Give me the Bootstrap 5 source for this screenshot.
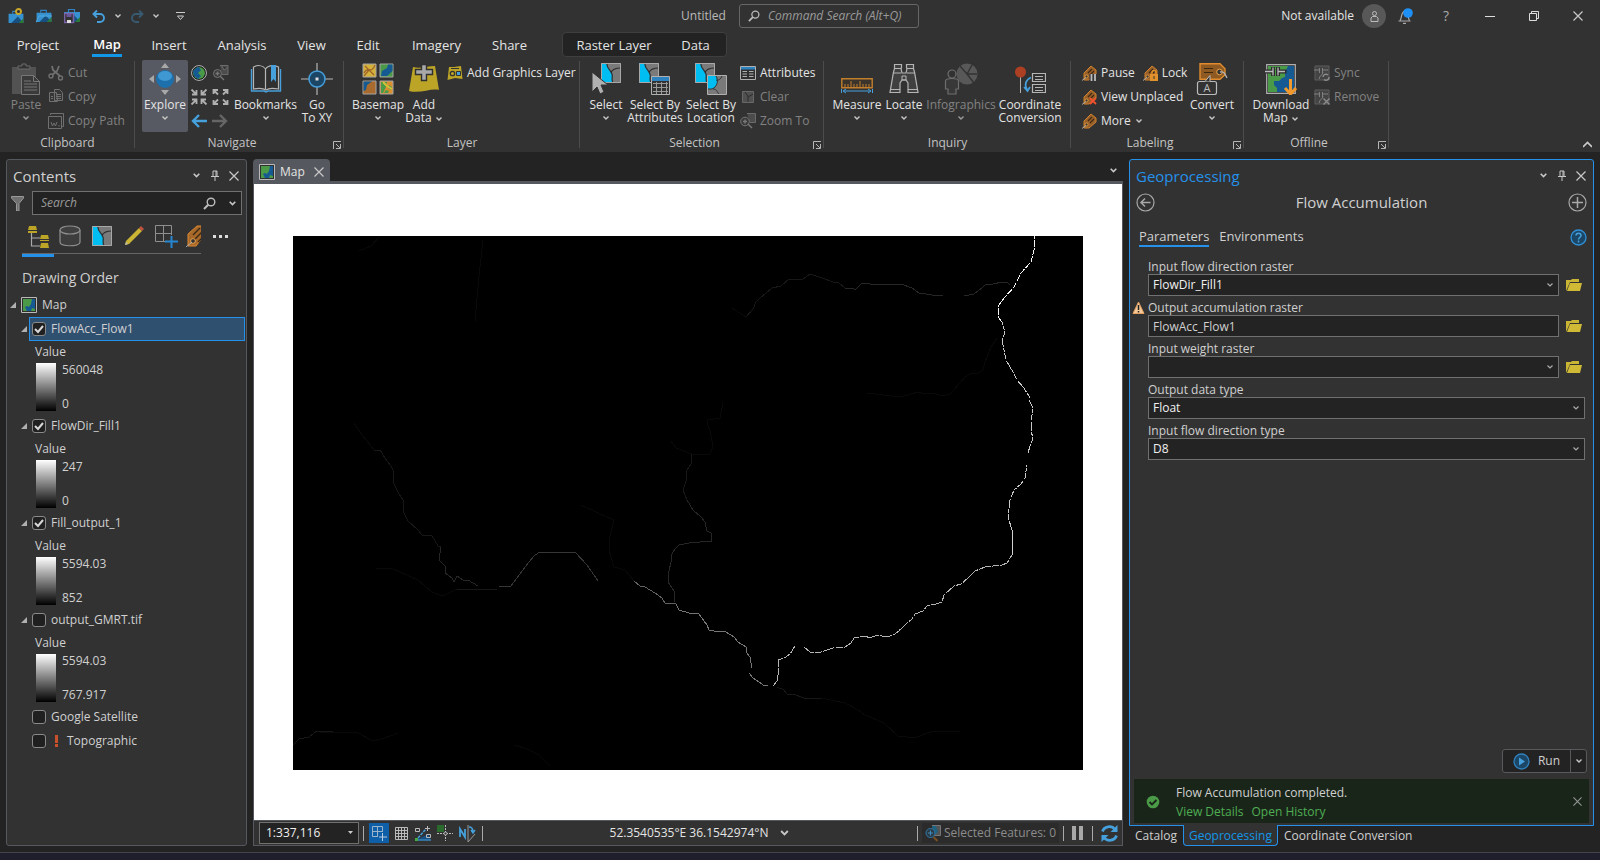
<!DOCTYPE html>
<html lang="en" data-bs-theme="dark">
<head>
<meta charset="utf-8">
<meta name="viewport" content="width=device-width, initial-scale=1">
<title>Untitled - Map</title>
<link href="https://cdn.jsdelivr.net/npm/bootstrap@5.3.0/dist/css/bootstrap.min.css" rel="stylesheet">
<style>
:root{--bg:#323232;--dark:#232323;--line:#55585f;--txt:#e4e4e4;--soft:#d0d0d0;--off:#828282;--blue:#2591ea;--field:#707070}
html,body{height:100%}
body{font:12px/16px "Open Sans","Noto Sans",sans-serif;background:var(--dark);color:var(--txt);overflow:hidden}
button{background:none;border:0;padding:0;color:inherit;font:inherit;text-align:center}
button:disabled{color:var(--off)}
svg{display:block;flex:none}
h1,h2,h3{font:inherit;color:inherit;margin:0}
.bar-title{background:var(--bg);height:32px}
.title-side{flex:1 1 0}
.title-side h1,.doc{color:#b9b9b9}
.cmd{width:180px;height:24px;border:1px solid #666;border-radius:3px;margin-left:13px}
.cmd input,.find input{background:none;border:0;outline:0;color:var(--txt);font:inherit;font-style:italic;min-width:0;width:0;padding:0}
.cmd input::placeholder,.find input::placeholder{color:#9a9a9a;opacity:1}
.avatar{width:24px;height:24px;border-radius:50%;background:#585858}
.win{width:44px;height:32px}
.win.ask{color:#aaa;font-size:14px}
.bell{width:38px}
.tabs{background:var(--bg);height:26px;font-size:13px;padding-left:2px}
.tab-main{display:grid;grid-template-columns:72px 66px 58px 88px 51px 62px 75px 71px}
.tab-ctx{display:grid;grid-template-columns:102px 61px;background:var(--dark);border:1px solid #3f3f3f;border-radius:4px;margin-left:17px;height:25px}
.tabs a,.gp-tabs a,.dock a,.msg a{color:inherit;text-decoration:none}
.tabs a{display:flex;align-items:center;justify-content:center;height:25px}
.tabs .tab-ctx a{height:23px}
.tabs a.on{font-weight:600;color:#fff}
.tabs a.on span{border-bottom:3px solid #1296e8;line-height:19px;margin-top:3px;padding:0 1px}
.ribbon{background:var(--bg);height:94px;padding-top:2px}
.grp{position:relative;height:90px;display:flex;flex-direction:column}
.grp::after{content:"";position:absolute;right:0;top:1px;bottom:2px;width:1px;background:#4c4c4c}
.grp-body{display:grid;height:76px}
.grp-name{color:#c3c3c3;height:16px;line-height:17px;text-align:center}
.has-launch .grp-name{padding-right:15px}
.launch{position:absolute;right:3px;bottom:1px}
.g1{width:135px}.g1 .grp-body{padding-left:10px;grid-template-columns:32px 90px;column-gap:6px}
.g2{width:209px}.g2 .grp-body{padding-left:7px;grid-template-columns:46px 44px 67px 36px}
.g3{width:236px}.g3 .grp-body{padding-left:7px;grid-template-columns:54px 38px 130px}
.g4{width:244px}.g4 .grp-body{padding-left:4px;grid-template-columns:44px 54px 58px 76px}
.g5{width:247px}.g5 .grp-body{padding-left:8px;grid-template-columns:50px 44px 70px 68px}
.g6{width:173px}.g6 .grp-body{padding-left:11px;grid-template-columns:107px 46px}
.g7{width:145px}.g7 .grp-body{padding-left:9px;grid-template-columns:56px 68px;column-gap:5px}
.big{display:flex;flex-direction:column;align-items:center;padding-top:3px;line-height:13px;height:72px;white-space:nowrap;min-width:0}
.big svg.pic{margin-bottom:3px}
.big svg.car{margin-top:4px}
.big.on{background:#575a62;border-radius:2px}
.smalls{display:flex;flex-direction:column;padding-top:1px}
.sm{display:flex;align-items:center;gap:4px;height:24px;white-space:nowrap}
.quick{display:grid;grid-template-columns:22px 22px;grid-auto-rows:24px;padding:1px 0 0 2px;height:73px;align-items:center}
.work{flex:1;min-height:0;padding:7px 6px 0;gap:6px}
.pane{background:var(--bg);border:1px solid var(--line);border-radius:3px}
.toc{width:241px;color:var(--soft)}
.pane-head{height:31px;font-size:15px;padding:0 7px 0 6px;gap:10px}
.pane-head h2{flex:1}
.find{height:24px;background:var(--dark);border:1px solid var(--field)}
.toc-tools{height:39px;margin:0 45px 0 15px;border-bottom:1px solid #666;display:grid;grid-template-columns:32px 32px 32px 32px 32px 19px;justify-items:center;align-items:center}
.toc-tools button{height:39px;display:flex;align-items:center;justify-content:center;width:100%;overflow:hidden}
.toc-tools .on{border-bottom:3px solid var(--blue);padding-top:3px;height:41px;margin-top:1px}
.order{font-size:14px;margin:16px 0 7px;padding-left:15px}
.lyr{height:24px;display:flex;align-items:center;gap:2px;padding-left:14px}
.lyr .lbl{flex:1;height:24px;border:1px solid transparent;display:flex;align-items:center;padding-left:2px;gap:5px;margin-right:1px}
.lyr.sel .lbl{background:#305070;border-color:var(--blue)}
.lyr.top{padding-left:3px;gap:5px}
.chk{appearance:none;width:14px;height:14px;margin:0;border:1px solid #8a8a8a;border-radius:3px;background:#202020}
.chk:checked{background:#202020 url("data:image/svg+xml,%3Csvg xmlns='http://www.w3.org/2000/svg' viewBox='0 0 12 12'%3E%3Cpath d='M2 6l3 3 5-6' fill='none' stroke='%23d8d8d8' stroke-width='2'/%3E%3C/svg%3E") center/12px no-repeat}
.val{font-weight:500;height:22px;line-height:22px;padding-left:28px}
.ramp-row{display:flex;gap:6px;padding-left:29px;height:48px;margin-bottom:3px}
.ramp{width:20px;background:linear-gradient(#fff,#000)}
.ramp-row ul{display:flex;flex-direction:column;justify-content:space-between;margin:0;padding:0;list-style:none;line-height:14px}
.view-tabs{padding-right:5px}
.view-tab{background:#55585e;height:22px;width:77px;border-radius:4px 4px 0 0;padding:3px 0 0 6px;gap:5px}
.view{border:1px solid var(--line);border-top:3px solid #55585e;background:#fff;padding:52px 39px 50px 39px}
.view svg{background:#000}
.status{height:25px;background:var(--bg);border:1px solid var(--line);border-top:0;padding:0 4px 0 5px}
.sep{width:1px;height:15px;background:#aaa}
.scale,.fld select,.fld input{appearance:none;background-color:var(--dark);border:1px solid var(--field);border-radius:0;color:#f0f0f0;font:inherit;padding:0 4px;height:22px}
.scale{width:100px;padding-left:6px;background-image:url("data:image/svg+xml,%3Csvg xmlns='http://www.w3.org/2000/svg' viewBox='0 0 6 4'%3E%3Cpath d='M0 0h6L3 4z' fill='%23ccc'/%3E%3C/svg%3E");background-repeat:no-repeat;background-position:right 5px center;background-size:5px}
.fld input{color:var(--soft)}
.fld select{background-image:url("data:image/svg+xml,%3Csvg xmlns='http://www.w3.org/2000/svg' viewBox='0 0 8 6'%3E%3Cpath d='M1.5 1.5L4 4l2.5-2.5' fill='none' stroke='%23aaa' stroke-width='1.2'/%3E%3C/svg%3E");background-repeat:no-repeat;background-position:right 4px center;background-size:8px}
.snaps{gap:2px;padding:0 5px}
.snap{width:20px;height:20px;display:flex;align-items:center;justify-content:center}
.snap.on{background:#0f5fa8}
.coords{gap:11px}
.feat{background:#2b2b2b;color:#8c8c8c;height:20px;padding:0 3px;gap:3px}
.gp{border-color:var(--blue);flex:1;border-radius:3px 3px 0 0;color:var(--soft)}
.gp h2{color:var(--blue)}
.gp-col{width:465px}
.gp-title{font-size:15px;height:22px;padding:0 6px}
.gp-tabs{font-size:13px;height:32px;padding:0 6px 0 9px;gap:10px;margin-top:8px}
.gp-tabs a{line-height:18px;border-bottom:2px solid transparent}
.gp-tabs a.on{border-color:var(--blue);font-weight:500}
.form{padding:6px 8px 0 18px}
.fld{position:relative;height:41px;display:grid;grid-template-columns:1fr;align-content:start}
.fld.br{grid-template-columns:1fr 26px}
.fld label{grid-column:1/-1;line-height:15px;height:15px}
.warn{position:absolute;left:-16px;top:1px}
.run{background:var(--dark);border:1px solid #58595c;border-radius:3px;height:24px;width:85px;margin-right:6px}
.run .go{flex:1;gap:14px;border-right:1px solid #58595c;height:22px}
.run .more{width:15px;height:22px;display:flex;align-items:center;justify-content:center}
.msg{background:#1a251a;height:44px;margin:6px 4px 2px 4px;padding:1px 7px 0 12px;line-height:15px}
.msg a{color:#4fae53}
.dock{height:20px}
.dock a{padding:0 6px;line-height:19px;height:20px;color:#cfcfcf}
.dock a.on{background:var(--bg);border:1px solid var(--blue);border-top:0;border-radius:0 0 4px 4px;margin-top:-1px;height:21px;line-height:21px;color:#1296e8;padding:0 5px}
.foot{height:14px;padding-top:6px}
.foot div{border-top:1px solid #44444a;height:8px;background:#1f1e2c}
</style>
</head>
<body class="d-flex flex-column">
<svg width="0" height="0" class="position-absolute" aria-hidden="true">
<symbol id="car" viewBox="0 0 8 6"><path d="M1.500 1.500L4 4l2.500-2.500" fill="none" stroke="#c8c8c8" stroke-width="1.400"/></symbol>
<symbol id="x" viewBox="0 0 10 10"><path d="M.5.5l9 9m0-9l-9 9" stroke="#c8c8c8" stroke-width="1.200"/></symbol>
<symbol id="pin" viewBox="0 0 8 11"><path d="M2 1h4v5.500H2zM5 1v5M0 6.500h8M4 7v4" fill="none" stroke="#c8c8c8"/></symbol>
<symbol id="mag" viewBox="0 0 13 13"><circle cx="8" cy="5" r="3.800" fill="none" stroke="#bbb" stroke-width="1.400"/><path d="M5.200 7.800L1 12" stroke="#bbb" stroke-width="2"/></symbol>
<symbol id="lau" viewBox="0 0 8 8"><path d="M.5 8V.5H8M3 3l4 4M7.500 3v4.500H3" fill="none" stroke="#b5b5b5"/></symbol>
<symbol id="tri" viewBox="0 0 6 6"><path d="M6 0v6H0z" fill="#b0b0b0"/></symbol>
<symbol id="mapico" viewBox="0 0 16 16"><path d="M.5.5h15v15H.5z" fill="#303030" stroke="#b9b9b9"/><path d="M2 2h12v12H2z" fill="#4b9a48"/><path d="M14 2v10l-3-1-1 3H6l-2-4 2-1 2 1 2-3 1-5z" fill="#155a93"/></symbol>
<symbol id="fold" viewBox="0 0 16 12"><path d="M0 12V1h5l1-1h7v3H4L1 10z" fill="#c9b434"/><path d="M4 4h12l-2 8H1z" fill="#d0ba35"/></symbol>
<symbol id="tag" viewBox="0 0 16 16"><path d="M2 8L9 1l5 4v4L7 15H2z" fill="#99602a" stroke="#cf812c"/><path d="M6 8l4-4M8 10l4-4" stroke="#3d2913" stroke-width="1.200"/><circle cx="4.500" cy="11.500" r="1.500" fill="#333" stroke="#e09a40"/><path d="M0 15.500l4-3" stroke="#aaa"/></symbol>
<symbol id="feat" viewBox="0 0 20 20"><path d="M0 0h20v20H0z" fill="#7a7a7a"/><path d="M0 0h6c-1 5 4 7 5 11 1 3-1 5 1 9H0z" fill="#00bdf2"/><path d="M6 0c-1 5 4 7 5 11 1 3-1 5 1 9M10 10c1-4 5-5 10-5" fill="none" stroke="#2e2e2e" stroke-width="1.200"/><path d="M.5.500h19v19H.5z" fill="none" stroke="#a8a8a8"/></symbol>
<symbol id="proj" viewBox="0 0 16 14"><path d="M4.500 4V1.500h6V4" fill="none" stroke="#2f82c4" stroke-width="1.200"/><path d="M0 4h16v10H0z" fill="#3591cf"/><path d="M3 14l7-7 6 7z" fill="#174f80"/><path d="M11 14l5-5v5z" fill="#2c7a3a"/></symbol>
<symbol id="offm" viewBox="0 0 16 16"><path d="M1 1h14v14H1z" fill="#444" stroke="#5c5c5c"/><path d="M0 5h5M5.500 3v5M8.500 3v5M9 5h5M5 14c0-3 4-4 4-7" fill="none" stroke="#808080"/></symbol>
</svg>

<header class="bar-title d-flex align-items-center">
 <div class="title-side d-flex align-items-center">
  <button class="ms-2" aria-label="New project"><svg width="16" height="16"><use href="#proj" y="2" width="16" height="13"/><circle cx="10.500" cy="3.500" r="2.500" fill="#333" stroke="#c9a82c" stroke-width="1.800"/><path d="M10.500 0v1m0 5v1M7 3.500h1m5 0h1" stroke="#c9a82c"/></svg></button>
  <button class="ms-2 ps-1" aria-label="Open project"><svg width="16" height="16"><use href="#proj" y="1" width="16" height="13"/><path d="M0 14.500L3 8h13" fill="none" stroke="#54a8dc"/></svg></button>
  <button class="ms-2 ps-1" aria-label="Save project"><svg width="16" height="16"><use href="#proj" width="16" height="14"/><path d="M.5 5.500h9v9h-9z" fill="#323232" stroke="#7a62a8" stroke-width="1.600"/><path d="M2.500 6h5v3h-5z" fill="#6c559a"/><path d="M3 12h4v3H3z" fill="#ddd"/></svg></button>
  <button class="ms-2 ps-1" aria-label="Undo"><svg width="14" height="13"><path d="M5 .5L1.500 4 5 7.500M2 4h6a4 4 0 010 8H5" fill="none" stroke="#45a0dc" stroke-width="1.900"/></svg></button>
  <svg class="ms-2" width="8" height="6"><use href="#car"/></svg>
  <button class="ms-2" aria-label="Redo"><svg width="14" height="13"><path d="M9 .5L12.500 4 9 7.500M12 4H6a4 4 0 000 8h3" fill="none" stroke="#375a70" stroke-width="1.900"/></svg></button>
  <svg class="ms-2" width="8" height="6"><use href="#car"/></svg>
  <button class="ms-3" aria-label="Customize"><svg width="9" height="9"><path d="M0 .5h9M1.500 4L4.500 7.500 7.500 4z" fill="none" stroke="#ccc"/></svg></button>
 </div>
 <h1 class="doc">Untitled</h1>
 <label class="cmd d-flex align-items-center px-2 gap-1"><svg width="12" height="12"><use href="#mag"/></svg><input class="flex-grow-1 ms-1" aria-label="Command Search" placeholder="Command Search (Alt+Q)"></label>
 <div class="title-side d-flex align-items-center justify-content-end">
  <span class="me-2">Not available</span>
  <button class="avatar d-flex align-items-center justify-content-center" aria-label="Account"><svg width="9" height="11"><circle cx="4.500" cy="2.500" r="2" fill="none" stroke="#bbb"/><path d="M1 10.500V7l1.500-1.500h4L8 7v3.500z" fill="none" stroke="#bbb"/></svg></button>
  <button class="bell d-flex justify-content-center" aria-label="Notifications"><svg width="15" height="16"><path d="M.5 13h12M2 12.500c2-2 .5-8 5-10 4 2 2.500 8 4.500 10M5 15.300h3" fill="none" stroke="#aaa" stroke-width="1.200"/><circle cx="10" cy="5" r="4.800" fill="#1e90f5"/></svg></button>
  <button class="win ask" aria-label="Help">?</button>
  <button class="win d-flex align-items-center justify-content-center" aria-label="Minimize"><svg width="10" height="10"><path d="M0 5.500h10" stroke="#ddd"/></svg></button>
  <button class="win d-flex align-items-center justify-content-center" aria-label="Restore"><svg width="10" height="10"><path d="M.5 2.500h7v7h-7zM2.500 2V.500h7v7H8" fill="none" stroke="#ddd"/></svg></button>
  <button class="win d-flex align-items-center justify-content-center" aria-label="Close"><svg width="10" height="10"><use href="#x"/></svg></button>
 </div>
</header>

<nav class="tabs d-flex">
 <div class="tab-main"><a href="#">Project</a><a href="#" class="on"><span>Map</span></a><a href="#">Insert</a><a href="#">Analysis</a><a href="#">View</a><a href="#">Edit</a><a href="#">Imagery</a><a href="#">Share</a></div>
 <div class="tab-ctx"><a href="#">Raster Layer</a><a href="#">Data</a></div>
</nav>

<section class="ribbon d-flex">
 <div class="grp g1"><div class="grp-body">
  <button class="big" disabled><svg class="pic" width="32" height="32"><path d="M2 4h24v27H2z" fill="#525252"/><path d="M8 6V3h4V1h4v2h4v3z" fill="#323232" stroke="#6a6a6a"/><path d="M11.500 12.500h12l6 6v13h-18z" fill="#3a3a3a" stroke="#777"/><path d="M23.500 12.500v6h6M14 18h7m-7 3h13m-13 3h13m-13 3h13" fill="none" stroke="#777"/></svg>Paste<svg class="car" width="8" height="6"><use href="#car" opacity=".7"/></svg></button>
  <div class="smalls">
   <button class="sm" disabled><svg width="16" height="16"><path d="M4 1l1 4 7 6M11 1L9 6l-5 4" stroke="#707070" stroke-width="1.800" fill="none"/><circle cx="3" cy="11" r="2" fill="none" stroke="#707070" stroke-width="1.400"/><circle cx="12.500" cy="13" r="2" fill="none" stroke="#707070" stroke-width="1.400"/></svg>Cut</button>
   <button class="sm" disabled><svg width="16" height="16"><path d="M1.500 3.500h7l1 9h-8zM6.500.5h5l3 3v8h-8z" fill="#363636" stroke="#707070"/><path d="M8 5.500h5m-5 2h5m-5 2h5m-10-2h2m-2 2h2" stroke="#707070"/></svg>Copy</button>
   <button class="sm" disabled><svg width="16" height="16"><path d="M2.500 2V.500h13v13H14M.5 3.500h13v12H.5z" fill="none" stroke="#707070"/><path d="M3 9l1.500 4L6 10l1.500 3L9 9M11 12v1.500" stroke="#707070" fill="none"/></svg>Copy Path</button>
  </div></div><div class="grp-name">Clipboard</div></div>

 <div class="grp g2 has-launch"><div class="grp-body">
  <button class="big on"><svg class="pic" width="34" height="32"><path d="M17 0l4 5h-8zM17 32l4-5h-8zM1 16l5-4v8zM33 16l-5-4v8z" fill="#a8a8a8"/><circle cx="17" cy="16" r="9" fill="#1d70ac"/><ellipse cx="17" cy="13" rx="7" ry="5" fill="#4098d2"/></svg>Explore<svg class="car" width="8" height="6"><use href="#car"/></svg></button>
  <div class="quick">
   <button aria-label="Full extent"><svg width="18" height="16"><circle cx="9" cy="8" r="7.400" fill="#111" stroke="#bbb"/><circle cx="9" cy="8" r="6" fill="#4b9a48"/><path d="M9 2l2 3-3 3 3 3-3 3-4-3-1-5 3-3z" fill="#155a93"/></svg></button>
   <button aria-label="Zoom to selection" disabled><svg width="18" height="16"><path d="M8 .5h8v9H10M10 1l2 4 3-2" fill="#4c4c4c" stroke="#6b6b6b"/><circle cx="5.500" cy="8.500" r="4" fill="#3a3a3a" stroke="#777"/><path d="M3.500 8.500h4m-2-2v4M8 11l4 4" stroke="#777" stroke-width="1.400"/></svg></button>
   <button aria-label="Fixed zoom in"><svg width="18" height="16"><path d="M1.500.5L6 5M6.500 1v4.500H2M16.500.5L12 5M11.500 1v4.500H16M1.500 15.500L6 11M2 10.500h4.500V15M16.500 15.500L12 11M16 10.500h-4.500V15" fill="none" stroke="#b0b0b0" stroke-width="1.800"/></svg></button>
   <button aria-label="Fixed zoom out"><svg width="18" height="16"><path d="M1.500 5V1H6M1.500 1L6 5.500M15.500 5V1H11M15.500 1L11 5.500M1.500 11v4H6M1.500 15L6 10.500M15.500 11v4H11M15.500 15L11 10.500" fill="none" stroke="#b0b0b0" stroke-width="1.800"/></svg></button>
   <button aria-label="Previous extent"><svg width="18" height="14"><path d="M17 7H3M9 1L3 7l6 6" fill="none" stroke="#45a0dc" stroke-width="2.400"/></svg></button>
   <button aria-label="Next extent"><svg width="18" height="14"><path d="M0 7h14M8 1l6 6-6 6" fill="none" stroke="#666" stroke-width="2.400"/></svg></button>
  </div>
  <button class="big"><svg class="pic" width="32" height="32"><path d="M1.500 28.500V6M30.500 28.500V6M1 28h13l2 1 2-1h13" fill="none" stroke="#45a0dc" stroke-width="1.400"/><path d="M3.500 26V4c4-2 9-2 12 2 3-4 8-4 13-2v22c-5-1-10-1-12.500 1-3-2-8-2-12.500-1zM15.500 6v20" fill="#303030" stroke="#b5b5b5" stroke-width="1.200"/><path d="M21 2h5v17l-2.500-3-2.500 3z" fill="#45a0dc"/></svg>Bookmarks<svg class="car" width="8" height="6"><use href="#car"/></svg></button>
  <button class="big"><svg class="pic" width="32" height="32"><path d="M16 0v9m0 14v9M0 16h9m14 0h9" stroke="#b5b5b5" stroke-width="1.200"/><circle cx="16" cy="16" r="8" fill="#1c4666" stroke="#45a0dc" stroke-width="1.500"/><path d="M14.500 14.500h3v3h-3z" fill="#ddd"/></svg>Go<br>To XY</button>
 </div><div class="grp-name">Navigate</div><button class="launch" aria-label="Navigate options"><svg width="8" height="8"><use href="#lau"/></svg></button></div>

 <div class="grp g3"><div class="grp-body">
  <button class="big"><svg class="pic" width="32" height="32"><path d="M1 1h13v13H1z" fill="#d3b13a" stroke="#a5a5a5"/><path d="M2 10c4-8 7 2 11-8M3 3l9 9M2 13l5-6" fill="none" stroke="#a0642a" stroke-width="1.200"/><path d="M18 1h13v13H18z" fill="#4b9a48" stroke="#a5a5a5"/><path d="M30.500 1.500V8L25 13h-6l1-5 5-3 1-3.500z" fill="#155a93"/><path d="M1 18h13v13H1z" fill="#a96a2d" stroke="#a5a5a5"/><path d="M1.500 18.500H10L5 22l-1 5-2.500 1z" fill="#155a93"/><path d="M18 18h13v13H18z" fill="#d98e30" stroke="#a5a5a5"/><path d="M19 19h6l-1 5-3 6h-2zM27 22l3 2-1 3-3-2zM24 27l3 1-1 2h-4z" fill="#4b9a48"/><path d="M21 19l4 4 5 3" stroke="#d3c13a" fill="none" stroke-width="2"/></svg>Basemap<svg class="car" width="8" height="6"><use href="#car"/></svg></button>
  <button class="big"><svg class="pic" width="32" height="32"><path d="M5 4c7 2 15-1 22-1l4 24c-8-2-19 4-30 1z" fill="#bca526"/><path d="M13.500 1.500h5v5h6v5h-6v6h-5v-6h-6v-5h6z" fill="#a8a8a8" stroke="#303030" stroke-width="1.400"/></svg>Add<br><span>Data <svg class="d-inline-block" width="8" height="6"><use href="#car"/></svg></span></button>
  <div class="smalls ps-1"><button class="sm"><svg width="16" height="16"><path d="M2 2h5l7-1 1.500 13L8 13l-7.500 2z" fill="#bca526"/><circle cx="5.500" cy="8.500" r="2.200" fill="none" stroke="#333" stroke-width="1.300"/><path d="M9.500 6.500h4v4h-4z" fill="#45a0dc" stroke="#333"/><path d="M4 3.500h8" stroke="#333"/></svg>Add Graphics Layer</button></div>
 </div><div class="grp-name">Layer</div></div>

 <div class="grp g4 has-launch"><div class="grp-body">
  <button class="big"><svg class="pic" width="32" height="32"><use href="#feat" x="11" y="0" width="20" height="20"/><path d="M2 9v20l5-5 3 7 4-2-3-7h7z" fill="#b0b0b0" stroke="#323232"/></svg>Select<svg class="car" width="8" height="6"><use href="#car"/></svg></button>
  <button class="big"><svg class="pic" width="32" height="32"><use href="#feat" width="20" height="20"/><path d="M12.500 13.500h18v18h-18z" fill="#333" stroke="#b0b0b0"/><path d="M13 14h17v4H13z" fill="#2d82c0"/><path d="M14 20.500h15m-15 4h15m-15 4h15M17.500 19v12m5-12v12m5-12v12" stroke="#999"/></svg>Select By<br>Attributes</button>
  <button class="big"><svg class="pic" width="32" height="32"><use href="#feat" width="20" height="20"/><path d="M12.500 12.500h19v19h-19z" fill="#7a7a7a" stroke="#b0b0b0"/><path d="M13 13h8c3 5 1 11-4 13h-4z" fill="#00bdf2"/><path d="M21 13c3 5 1 11-4 13h-4M21 17c2 1 5-1 6-4M18 26c4 0 4 3 6 5" fill="none" stroke="#333"/></svg>Select By<br>Location</button>
  <div class="smalls">
   <button class="sm"><svg width="16" height="14"><path d="M.5.500h15v13H.5z" fill="#303030" stroke="#b0b0b0"/><path d="M1 1h14v2.500H1z" fill="#2d82c0"/><path d="M2.500 5.500H7m2 0h4.500M2.500 8H7m2 0h4.500m-11 2.500H7m2 0h4.500" stroke="#b0b0b0"/></svg>Attributes</button>
   <button class="sm" disabled><svg width="16" height="14"><path d="M2.500 1.500h11v11h-11z" fill="#505050" stroke="#686868"/><path d="M5 2l3 4v6M8 7l5-3" fill="none" stroke="#2c2c2c"/></svg>Clear</button>
   <button class="sm" disabled><svg width="16" height="16"><path d="M7 .5h8.500v9H10" fill="#4c4c4c" stroke="#6b6b6b"/><circle cx="5" cy="8.500" r="4.300" fill="#3a3a3a" stroke="#777"/><path d="M3 8.500h4m-2-2v4M8 11l4 4" stroke="#777" stroke-width="1.500"/></svg>Zoom To</button>
  </div>
 </div><div class="grp-name">Selection</div><button class="launch" aria-label="Selection options"><svg width="8" height="8"><use href="#lau"/></svg></button></div>

 <div class="grp g5"><div class="grp-body">
  <button class="big"><svg class="pic" width="32" height="32"><path d="M.8 15.800h30.400v9H.8z" fill="#3b342c" stroke="#c27f2c" stroke-width="1.400"/><path d="M4 25v-4m3 4v-4m3 4v-7m3 7v-4m3 4v-4m3 4v-7m3 7v-4m3 4v-4m3 4v-4" stroke="#c27f2c"/><path d="M.5 26v4M31.500 26v4M3 28h26M5 26l-3 2 3 2m22-4l3 2-3 2" stroke="#45a0dc" fill="none"/></svg>Measure<svg class="car" width="8" height="6"><use href="#car"/></svg></button>
  <button class="big"><svg class="pic" width="32" height="32"><path d="M6.500 5.500v-4h7v4M18.500 5.500v-4h7v4M5.500 9l1-3.500H13l1 4.500h4l1-4.500h6.500l1 3.500 3.500 20.500H20V20l-2-3h-4l-2 3v9.500H2z" fill="#404040" stroke="#b5b5b5" stroke-width="1.200"/><path d="M3 26.500h9m8 0h9M5 10h8m6 0h8M14 13h4v4h-4z" stroke="#b5b5b5" fill="none"/></svg>Locate<svg class="car" width="8" height="6"><use href="#car"/></svg></button>
  <button class="big" disabled><svg class="pic" width="34" height="32"><circle cx="23" cy="11" r="10.500" fill="#585858"/><path d="M23 11L16 3M23 11h10M23 11l7 9M23 11l5-9" stroke="#323232" stroke-width="1.400"/><circle cx="8" cy="11" r="4" fill="#323232" stroke="#6e6e6e" stroke-width="1.200"/><path d="M1.500 18c0-2 3-2.500 6.500-2.500s6.500.5 6.500 2.500v8H12v5H4v-5H1.500z" fill="#383838" stroke="#6e6e6e" stroke-width="1.200"/></svg>Infographics<svg class="car" width="8" height="6"><use href="#car" opacity=".7"/></svg></button>
  <button class="big"><svg class="pic" width="32" height="32"><path d="M6.500 12v18" stroke="#b0b0b0"/><circle cx="6.500" cy="9" r="5.500" fill="#ad3f22"/><path d="M18.500 10.500h13v8h-13zM18.500 21.500h13v8h-13z" fill="#303030" stroke="#b5b5b5" stroke-width="1.200"/><path d="M21 13.500h8m-8 3h8m-8 8h8m-8 3h8" stroke="#b5b5b5"/><path d="M17 14.500c-5 2-7 7-4 12M10 24l3.500 4 2.500-4" stroke="#45a0dc" stroke-width="1.700" fill="none"/></svg>Coordinate<br>Conversion</button>
 </div><div class="grp-name">Inquiry</div></div>

 <div class="grp g6 has-launch"><div class="grp-body">
  <div class="smalls">
   <div class="d-flex gap-2"><button class="sm"><svg width="15" height="16"><use href="#tag" width="16" height="16"/><path d="M9.500 9v7m3.500-7v7" stroke="#333" stroke-width="4"/><path d="M9.500 9v7m3.500-7v7" stroke="#bbb" stroke-width="1.800"/></svg>Pause</button>
   <button class="sm"><svg width="15" height="16"><use href="#tag" width="16" height="16"/><path d="M7 9h8v7H7z" fill="#e0912c"/><path d="M9 9V7.500a2 2 0 014 0V9" fill="none" stroke="#e0912c" stroke-width="1.400"/><path d="M11 11v3" stroke="#333"/></svg>Lock</button></div>
   <button class="sm"><svg width="15" height="16"><use href="#tag" width="16" height="16"/><path d="M8 9l6 6m0-6l-6 6" stroke="#f0522d" stroke-width="1.800"/></svg>View Unplaced</button>
   <button class="sm"><svg width="15" height="16"><use href="#tag" width="16" height="16"/></svg>More <svg width="8" height="6"><use href="#car"/></svg></button>
  </div>
  <button class="big"><svg class="pic" width="32" height="32"><path d="M4 .8h20l5 5v6l-5 4.500H4z" fill="#8f5a22" stroke="#e08c2e" stroke-width="1.400"/><path d="M8 5.500h9m-9 4h9" stroke="#3b2813" stroke-width="1.200"/><circle cx="23.500" cy="9" r="2.800" fill="#333" stroke="#e9a24b"/><path d="M24 9c4-1 5 2 7 6" stroke="#b0b0b0" fill="none" stroke-width="1.300"/><rect x="1.500" y="18.500" width="19" height="13" rx="2" fill="#323232" stroke="#bbb" stroke-width="1.200"/><path d="M9 18.500l5-6v6" fill="#323232" stroke="#bbb"/><text x="11" y="29" font-size="11" text-anchor="middle" fill="#bbb">A</text></svg>Convert<svg class="car" width="8" height="6"><use href="#car"/></svg></button>
 </div><div class="grp-name">Labeling</div><button class="launch" aria-label="Labeling options"><svg width="8" height="8"><use href="#lau"/></svg></button></div>

 <div class="grp g7 has-launch"><div class="grp-body">
  <button class="big"><svg class="pic" width="32" height="32"><path d="M1.700 1.700h28.600v28.600H1.700z" fill="#303030" stroke="#b0b0b0" stroke-width="1.200"/><path d="M3 3h26v26H3z" fill="#4b9a48"/><path d="M23 3h6v26H12v-4l-3-3v-4h5l3-3 3-1V9z" fill="#155a93"/><path d="M0 8.500h7.500M8 4v9M13 4v9M13.500 8.500h8" stroke="#2c2c2c" stroke-width="4"/><path d="M0 8.500h8M8 4.500v8M13 4.500v8M13 8.500h7" stroke="#bbb" stroke-width="1.300"/><path d="M25.500 16v14M20 25l5.500 6 5.500-6" fill="none" stroke="#f2992e" stroke-width="3"/></svg>Download<br><span>Map <svg class="d-inline-block" width="8" height="6"><use href="#car"/></svg></span></button>
  <div class="smalls">
   <button class="sm" disabled><svg width="16" height="16"><use href="#offm"/><path d="M9 12a3 3 0 015-2M15 12a3 3 0 01-5 2.500" stroke="#8c8c8c" fill="none" stroke-width="1.400"/></svg>Sync</button>
   <button class="sm" disabled><svg width="16" height="16"><use href="#offm"/><path d="M9.500 9.500l6 6m0-6l-6 6" stroke="#8c8c8c" stroke-width="1.400"/></svg>Remove</button>
  </div>
 </div><div class="grp-name">Offline</div><button class="launch" aria-label="Offline options"><svg width="8" height="8"><use href="#lau"/></svg></button></div>
 <div class="flex-grow-1 d-flex justify-content-end align-items-end pe-2 pb-1"><button aria-label="Collapse ribbon"><svg width="9" height="7"><path d="M0 6l4.500-4.500L9 6" fill="none" stroke="#ccc" stroke-width="1.600"/></svg></button></div>
</section>

<main class="work d-flex">
 <aside class="toc pane">
  <div class="pane-head d-flex align-items-center"><h2>Contents</h2><svg width="9" height="7"><use href="#car"/></svg><svg width="8" height="11"><use href="#pin"/></svg><button aria-label="Close Contents"><svg width="10" height="10"><use href="#x"/></svg></button></div>
  <div class="d-flex align-items-center ps-1 pe-1"><svg width="13" height="16"><path d="M.5 1.500h12v1.500L8 8.500V16H5.500V8.500L.5 3z" fill="#707070" stroke="#999"/></svg>
   <label class="find d-flex align-items-center flex-grow-1 ms-2 ps-1 pe-1 gap-1"><input class="flex-grow-1 ms-1" aria-label="Search" placeholder="Search"><svg class="me-2" width="13" height="13"><use href="#mag"/></svg><svg width="9" height="7"><use href="#car"/></svg></label></div>
  <div class="position-relative">
   <div class="toc-tools">
    <button class="on" aria-label="List by drawing order"><svg width="24" height="24"><path d="M5.500 8v13H14M5.500 13H14" fill="none" stroke="#aaa" stroke-width="1.200"/><path d="M3 1h7l1 4H2zM2 6h9v2H2zM15 10h7l1 4h-9zM14 15h9v1h-9zM15 18h7l1 5h-9z" fill="#bca526"/></svg></button>
    <button aria-label="List by data source"><svg width="22" height="22"><path d="M1 5v12c0 5 20 5 20 0V5" fill="#3d3d3d" stroke="#8f8f8f" stroke-width="1.200"/><ellipse cx="11" cy="5" rx="10" ry="4" fill="#404040" stroke="#8f8f8f" stroke-width="1.200"/></svg></button>
    <button aria-label="List by selection"><svg width="20" height="20"><use href="#feat"/></svg></button>
    <button aria-label="List by editing"><svg width="20" height="20"><path d="M1 19l1-4L15 2l3 3L5 18z" fill="#c9b434"/><path d="M15 2l2-2 3 3-2 2z" fill="#c0523f"/><path d="M1 19l1-3 2 2z" fill="#bbb"/></svg></button>
    <button aria-label="List by snapping"><svg width="24" height="24"><path d="M1.500 1.500h16v16h-16zM9.500 1v16M1 9.500h16" fill="none" stroke="#8f8f8f"/><path d="M17.500 11v13M11 17.500h13" stroke="#323232" stroke-width="4"/><path d="M17.500 12v12M11 17.500h13" stroke="#2585d0" stroke-width="2"/></svg></button>
    <button class="justify-content-start" aria-label="List by labeling"><svg width="20" height="22" viewBox="0 0 20 22"><path d="M6 9L15 1h5v12l-6 8H6z" fill="#a8682a" stroke="#dc8a30"/><path d="M11 10l7-7M13 14l7-7M16 17l5-5" stroke="#3b2813" stroke-width="1.400"/><circle cx="11" cy="16" r="2.400" fill="#333" stroke="#e9a24b"/><path d="M4 22l6-5" stroke="#b0b0b0"/></svg></button>
   </div>
   <button class="position-absolute end-0 top-50 me-3" aria-label="More"><svg width="17" height="3"><path d="M0 0h3v3H0zM6 0h3v3H6zM12 0h3v3h-3z" fill="#ddd"/></svg></button>
  </div>
  <div class="order">Drawing Order</div>
  <div class="lyr top"><svg width="6" height="6"><use href="#tri"/></svg><svg width="16" height="16"><use href="#mapico"/></svg>Map</div>
  <div class="lyr sel"><svg width="6" height="6"><use href="#tri"/></svg><label class="lbl"><input class="chk" type="checkbox" checked>FlowAcc_Flow1</label></div>
  <div class="val">Value</div><div class="ramp-row"><div class="ramp"></div><ul><li>560048</li><li>0</li></ul></div>
  <div class="lyr"><svg width="6" height="6"><use href="#tri"/></svg><label class="lbl"><input class="chk" type="checkbox" checked>FlowDir_Fill1</label></div>
  <div class="val">Value</div><div class="ramp-row"><div class="ramp"></div><ul><li>247</li><li>0</li></ul></div>
  <div class="lyr"><svg width="6" height="6"><use href="#tri"/></svg><label class="lbl"><input class="chk" type="checkbox" checked>Fill_output_1</label></div>
  <div class="val">Value</div><div class="ramp-row"><div class="ramp"></div><ul><li>5594.03</li><li>852</li></ul></div>
  <div class="lyr"><svg width="6" height="6"><use href="#tri"/></svg><label class="lbl"><input class="chk" type="checkbox">output_GMRT.tif</label></div>
  <div class="val">Value</div><div class="ramp-row"><div class="ramp"></div><ul><li>5594.03</li><li>767.917</li></ul></div>
  <div class="lyr"><svg width="6" height="6"></svg><label class="lbl"><input class="chk" type="checkbox">Google Satellite</label></div>
  <div class="lyr"><svg width="6" height="6"></svg><label class="lbl"><input class="chk" type="checkbox"><svg class="mx-1" width="3" height="12"><path d="M0 0h3v8H0zM0 9h3v3H0z" fill="#c8502b"/></svg>Topographic</label></div>
 </aside>

 <section class="flex-grow-1 d-flex flex-column">
  <div class="view-tabs d-flex align-items-center justify-content-between"><div class="view-tab d-flex align-items-center"><svg width="16" height="16"><use href="#mapico"/></svg>Map<button class="ms-1" aria-label="Close Map"><svg width="10" height="10"><use href="#x"/></svg></button></div><svg width="9" height="7"><use href="#car"/></svg></div>
  <div class="view flex-grow-1">
   <svg width="100%" height="100%" viewBox="0 0 790 534" preserveAspectRatio="none" fill="none" shape-rendering="crispEdges">
    <path stroke="#090909" d="M86 1L78 10 66 15M190 4L186 40 182 85M704 102L698 111 692 126 690 134 685 137 677 138 672 141 661 154 657 158 649 160 640 157 632 158 625 156 608 161 590 159 574 157M528 462L552 467 565 474 572 479 591 487 605 500 622 502 634 497 641 495 667 496M27 496L63 496 80 505 92 502 105 497M221 509L234 513 246 519 257 530M288 269L305 277 321 284 317 300 316 314 321 331 332 334 341 345M61 187L69 199 78 210 81 214M83 333L98 332 125 344 139 356 150 360 164 353M430 167L427 182 415 184 414 186 417 195 420 210 417 218 399 218M378 205L383 212 399 218M439 72L453 81"/>
    <path stroke="#171717" d="M484 451L491 454 494 458 500 458 511 462 528 462M0 509L6 503 16 501 24 495 33 496 40 495M453 81L460 73 463 66 467 62 479 52 488 50 496 43 510 43 517 38 529 42 540 46 546 47 552 52M81 214L87 214 92 222 98 230 100 234 101 248 106 258 110 264 111 277 115 285 125 294 129 299 139 300 145 310 148 311M399 218L398 228 394 234 393 245 390 254 394 264M164 353L204 353"/>
    <path stroke="#262626" d="M552 52L560 52 562 54 569 47 585 49 608 48 619 52 626 57 639 59 650 60M671 60L681 58 690 51 692 49 700 48 709 46 714 46 717 49M394 264L400 274 408 281 412 286 414 295 418 297 419 305 407 306 396 307 386 309 382 313 379 318 378 326 376 335 375 346 381 355 382 366M148 311L146 324 152 330 152 337 159 342 161 346 164 340 170 344 175 344 185 350"/>
    <path stroke="#363636" d="M206 350L218 350 236 326 242 319 247 316 282 316 294 329 305 345"/>
    <path stroke="#626262" d="M341 345L347 350 352 351 362 357 369 362 372 367 383 368"/>
    <path stroke="#757575" d="M383 368L386 374 396 377 406 378 411 385 414 389 416 394 421 395 433 396 441 401 445 406 453 411 454 417 457 421 458 427 459 432M456 437L460 442 466 446 470 449 475 450"/>
    <path stroke="#b4b4b4" stroke-dasharray="12 1 7 1" d="M480 450L484 445 486 434 485 424 493 421 497 418 502 410M511 411L517 416 528 416 540 412 552 411 558 407 561 402 572 400 577 402 584 399 594 401 602 398 609 392 614 387 619 383 622 378 630 375 634 370 643 368 649 366 651 359 661 350 668 348 675 342 682 335 692 331 709 329 714 327 719 319"/>
    <path stroke="#d0d0d0" d="M719 319L719 294"/>
    <path stroke="#c8c8c8" stroke-dasharray="9 2 6 1 4 1" d="M719 294L715 281 717 264 721 254 728 248 732 242 734 229M735 217L737 210 740 202 738 195 738 187 740 172 737 166 736 160 730 151 724 144 719 134 713 124 711 114 709 104 712 96 709 86"/>
    <path stroke="#f4f4f4" stroke-dasharray="7 1" d="M709 86L705 81 706 69 712 61 721 51 728 37 738 26 741 14 742 0"/>
   </svg>
  </div>
  <div class="status d-flex align-items-center">
   <select class="scale" aria-label="Map scale"><option>1:337,116</option></select>
   <span class="sep ms-1"></span>
   <div class="snaps d-flex">
   <button class="snap on" aria-label="Constraints"><svg width="16" height="17"><path d="M1.500 1.500h10v10h-10zM6.500 1v10M1 6.500h10" fill="none" stroke="#9cb4c8"/><path d="M11.500 7v9M7 11.500h9" stroke="#0f5fa8" stroke-width="4"/><path d="M11.500 8v8M8 12h8" stroke="#bcd"/></svg></button>
   <button class="snap" aria-label="Grid"><svg width="13" height="13"><path d="M.5.500h12v12H.5zM3.500 0v13m3-13v13m3-13v13M0 3.500h13M0 6.500h13M0 9.500h13" fill="none" stroke="#bbb"/></svg></button>
   <button class="snap" aria-label="Topology"><svg width="16" height="15"><path d="M0 14.500h16L13 8z" fill="#174f80"/><path d="M2 14h14" stroke="#45a0dc"/><path d="M3 12l8-9" stroke="#45a0dc" stroke-width="1.500" stroke-dasharray="3 1"/><path d="M.5 2.500h4v3h-4zM11.500 8.500h4v3h-4zM10 2.500h5M12.500 0v5" fill="none" stroke="#bbb"/><path d="M0 12h3v3H0z" fill="#4a4"/></svg></button>
   <button class="snap" aria-label="Dynamic constraints"><svg width="16" height="16"><path d="M0 0h7v7H0z" fill="#2a6a2c"/><path d="M8.500 0v16M0 8.500h16" stroke="#bbb" stroke-dasharray="2 1"/><circle cx="8.500" cy="8.500" r="1.500" fill="#323232" stroke="#bbb"/></svg></button>
   <button class="snap" aria-label="Correction"><svg width="17" height="17"><path d="M1 12V4l5 8V4" fill="none" stroke="#45a0dc" stroke-width="1.800"/><path d="M9 0v17l7-8" fill="none" stroke="#999"/><path d="M10 2c3 0 4 2 4 5m-2-2l2 3 2-3" fill="none" stroke="#45a0dc" stroke-width="1.400"/></svg></button>
   </div>
   <span class="sep"></span>
   <div class="coords flex-grow-1 d-flex align-items-center justify-content-center"><span>52.3540535°E 36.1542974°N</span><svg width="11" height="8"><use href="#car"/></svg></div>
   <span class="sep me-1"></span>
   <button class="feat d-flex align-items-center"><svg width="16" height="17"><path d="M7 .5h8.500v10H9" fill="#555" stroke="#777"/><path d="M7 1h4l2 6-4 3z" fill="#1e6280"/><circle cx="5.500" cy="8" r="4.500" fill="#2b3a44" stroke="#2f79aa"/><path d="M3 8h5M5.500 5.500v5" stroke="#3f8dc0"/><path d="M8.500 12l4 4" stroke="#7a4f24" stroke-width="2"/></svg>Selected Features: 0</button>
   <span class="sep ms-1"></span>
   <button class="px-2" aria-label="Pause drawing"><svg width="12" height="14"><path d="M0 0h4v14H0zM7 0h4v14H7z" fill="#a8a8a8"/></svg></button>
   <span class="sep"></span>
   <button class="ps-2" aria-label="Refresh"><svg width="17" height="17"><path d="M1.500 6.500A7 6.500 0 0114 4.500M15.500 10.500A7 6.500 0 013 12.500" fill="none" stroke="#45a0dc" stroke-width="2.800"/><path d="M16.500 0v7h-7zM.5 17v-7h7z" fill="#45a0dc"/></svg></button>
  </div>
 </section>

 <aside class="gp-col d-flex flex-column">
  <div class="gp pane d-flex flex-column">
   <div class="pane-head d-flex align-items-center"><h2>Geoprocessing</h2><svg width="9" height="7"><use href="#car"/></svg><svg width="8" height="11"><use href="#pin"/></svg><button aria-label="Close Geoprocessing"><svg width="10" height="10"><use href="#x"/></svg></button></div>
   <div class="gp-title d-flex align-items-center justify-content-between"><button aria-label="Back"><svg width="19" height="19"><circle cx="9.500" cy="9.500" r="8.500" fill="none" stroke="#a8a8a8" stroke-width="1.200"/><path d="M14.500 9.500H5.500M9 5.500l-4 4 4 4" fill="none" stroke="#a8a8a8" stroke-width="1.500"/></svg></button><h3>Flow Accumulation</h3><button aria-label="Add"><svg width="19" height="19"><circle cx="9.500" cy="9.500" r="8.500" fill="none" stroke="#a8a8a8" stroke-width="1.200"/><path d="M9.500 4v11M4 9.500h11" stroke="#a8a8a8" stroke-width="1.500"/></svg></button></div>
   <div class="gp-tabs d-flex align-items-center"><a href="#" class="on">Parameters</a><a href="#" class="flex-grow-1">Environments</a><button aria-label="Help"><svg width="17" height="17"><circle cx="8.500" cy="8.500" r="7.500" fill="#1c4666" stroke="#2f90d8" stroke-width="1.300"/><path d="M6 6.500c0-3 5-3 5 0 0 2-2.500 2-2.500 4M8.500 11.500v2" stroke="#45a0dc" fill="none" stroke-width="1.500"/></svg></button></div>
   <div class="form flex-grow-1">
    <div class="fld br"><label for="f1">Input flow direction raster</label><select id="f1"><option>FlowDir_Fill1</option></select><button class="d-flex align-items-center justify-content-center ps-1" aria-label="Browse"><svg width="16" height="12"><use href="#fold"/></svg></button></div>
    <div class="fld br"><svg class="warn" width="13" height="13"><path d="M6.500 1L12 12.500H1z" fill="#f5c896" stroke="#e0a064"/><path d="M6.500 4v5m0 1v1.500" stroke="#222" stroke-width="1.500"/></svg><label for="f2">Output accumulation raster</label><input id="f2" value="FlowAcc_Flow1"><button class="d-flex align-items-center justify-content-center ps-1" aria-label="Browse"><svg width="16" height="12"><use href="#fold"/></svg></button></div>
    <div class="fld br"><label for="f3">Input weight raster</label><select id="f3"><option></option></select><button class="d-flex align-items-center justify-content-center ps-1" aria-label="Browse"><svg width="16" height="12"><use href="#fold"/></svg></button></div>
    <div class="fld"><label for="f4">Output data type</label><select id="f4"><option>Float</option></select></div>
    <div class="fld"><label for="f5">Input flow direction type</label><select id="f5"><option>D8</option></select></div>
   </div>
   <div class="d-flex justify-content-end"><div class="run d-flex"><button class="go d-flex align-items-center justify-content-center gap-2"><svg width="17" height="17"><circle cx="8.500" cy="8.500" r="7.500" fill="#1c4666" stroke="#2f80bc" stroke-width="1.300"/><path d="M6 4.500v8l6-4z" fill="#45a0dc"/></svg>Run</button><button class="more" aria-label="Run options"><svg width="8" height="6"><use href="#car"/></svg></button></div></div>
   <div class="msg d-flex align-items-center"><svg width="14" height="14"><circle cx="7" cy="7" r="6.300" fill="#4b9a48"/><path d="M3.500 7l2.500 2.500L10.500 5" fill="none" stroke="#1a251a" stroke-width="1.800"/></svg>
    <div class="flex-grow-1 ms-3"><div class="mb-1">Flow Accumulation completed.</div><div class="d-flex gap-2"><a href="#">View Details</a><a href="#">Open History</a></div></div>
    <button aria-label="Dismiss"><svg width="9" height="9" viewBox="0 0 10 10" opacity=".7"><use href="#x"/></svg></button></div>
  </div>
  <div class="dock d-flex"><a href="#">Catalog</a><a href="#" class="on">Geoprocessing</a><a href="#">Coordinate Conversion</a></div>
 </aside>
</main>
<footer class="foot"><div></div></footer>
<script src="https://cdn.jsdelivr.net/npm/bootstrap@5.3.0/dist/js/bootstrap.bundle.min.js"></script>
</body>
</html>
